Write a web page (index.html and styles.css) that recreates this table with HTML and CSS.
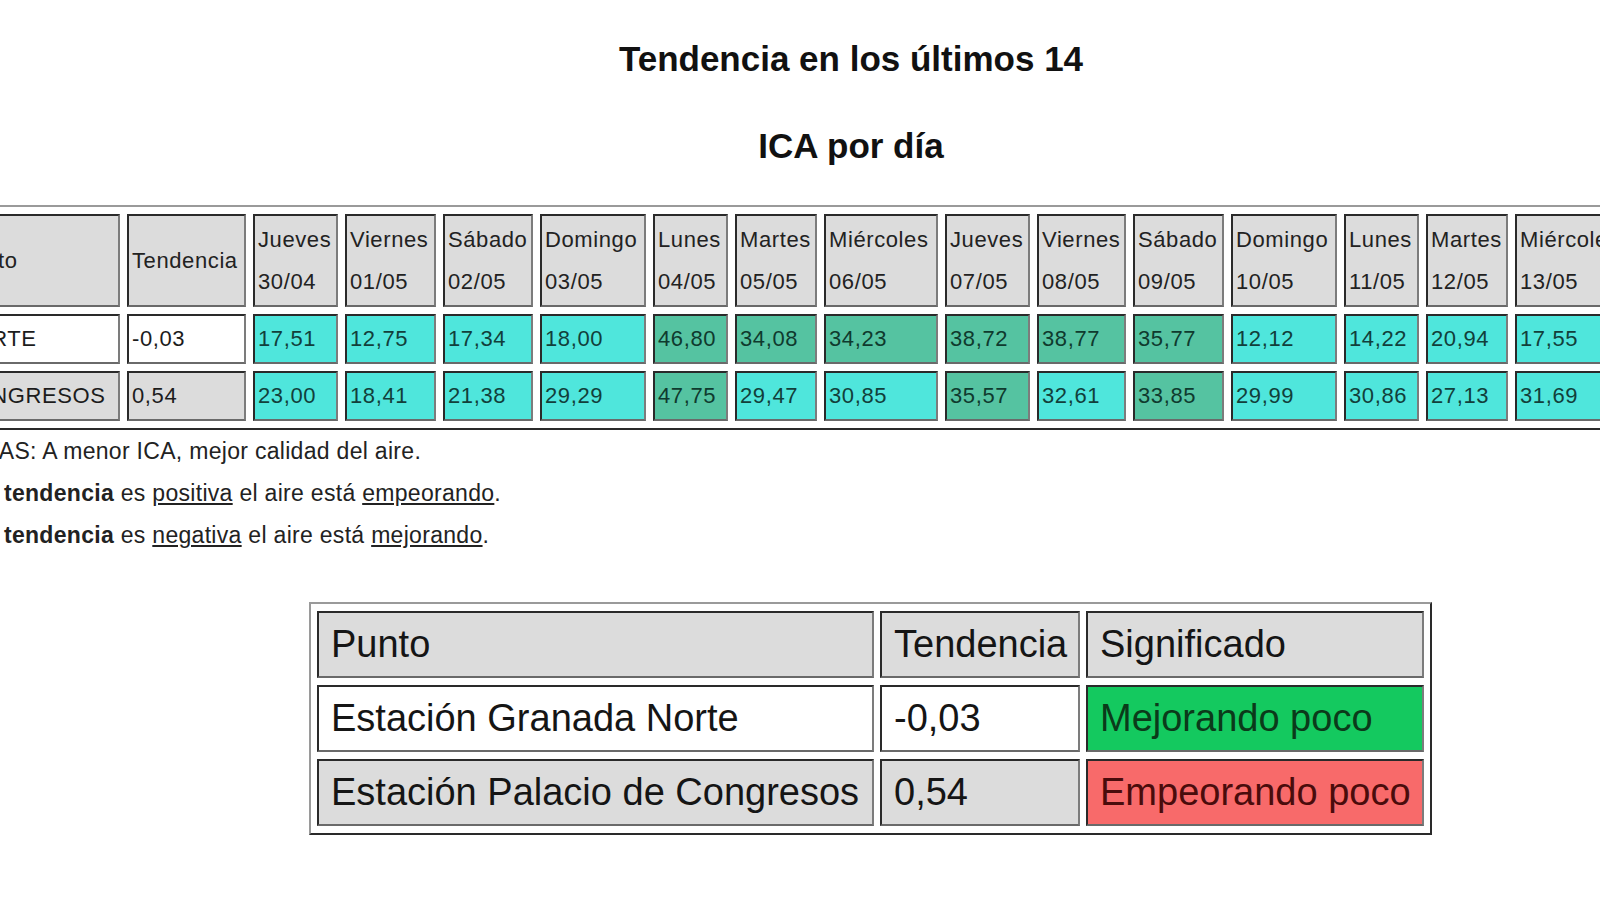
FILE: index.html
```html
<!DOCTYPE html>
<html lang="es">
<head>
<meta charset="utf-8">
<title>Tendencia ICA</title>
<link rel="stylesheet" href="styles.css">
</head>
<body>
<div class="page">
  <h1 class="heading heading-first">Tendencia en los últimos 14</h1>
  <h1 class="heading heading-second">ICA por día</h1>

  <table class="ica">
    <tr>
      <th class="c-punto">Punto</th>
      <th class="c-tend">Tendencia</th>
      <th class="c-jue"><span class="ln">Jueves</span><span class="ln">30/04</span></th>
      <th class="c-vie"><span class="ln">Viernes</span><span class="ln">01/05</span></th>
      <th class="c-sab"><span class="ln">Sábado</span><span class="ln">02/05</span></th>
      <th class="c-dom"><span class="ln">Domingo</span><span class="ln">03/05</span></th>
      <th class="c-lun"><span class="ln">Lunes</span><span class="ln">04/05</span></th>
      <th class="c-mar"><span class="ln">Martes</span><span class="ln">05/05</span></th>
      <th class="c-mie"><span class="ln">Miércoles</span><span class="ln">06/05</span></th>
      <th class="c-jue"><span class="ln">Jueves</span><span class="ln">07/05</span></th>
      <th class="c-vie2"><span class="ln">Viernes</span><span class="ln">08/05</span></th>
      <th class="c-sab2"><span class="ln">Sábado</span><span class="ln">09/05</span></th>
      <th class="c-dom"><span class="ln">Domingo</span><span class="ln">10/05</span></th>
      <th class="c-lun"><span class="ln">Lunes</span><span class="ln">11/05</span></th>
      <th class="c-mar"><span class="ln">Martes</span><span class="ln">12/05</span></th>
      <th class="c-mie"><span class="ln">Miércoles</span><span class="ln">13/05</span></th>
    </tr>
    <tr class="row">
      <td class="white">NORTE</td>
      <td class="white">-0,03</td>
      <td class="low">17,51</td>
      <td class="low">12,75</td>
      <td class="low">17,34</td>
      <td class="low">18,00</td>
      <td class="mid">46,80</td>
      <td class="mid">34,08</td>
      <td class="mid">34,23</td>
      <td class="mid">38,72</td>
      <td class="mid">38,77</td>
      <td class="mid">35,77</td>
      <td class="low">12,12</td>
      <td class="low">14,22</td>
      <td class="low">20,94</td>
      <td class="low">17,55</td>
    </tr>
    <tr class="row">
      <td class="grey">CONGRESOS</td>
      <td class="grey">0,54</td>
      <td class="low">23,00</td>
      <td class="low">18,41</td>
      <td class="low">21,38</td>
      <td class="low">29,29</td>
      <td class="mid">47,75</td>
      <td class="low">29,47</td>
      <td class="low">30,85</td>
      <td class="mid">35,57</td>
      <td class="low">32,61</td>
      <td class="mid">33,85</td>
      <td class="low">29,99</td>
      <td class="low">30,86</td>
      <td class="low">27,13</td>
      <td class="low">31,69</td>
    </tr>
  </table>

  <div class="notes">
    <p class="note">NOTAS: A menor ICA, mejor calidad del aire.</p>
    <p class="note">Si la <b>tendencia</b> es <u>positiva</u> el aire está <u>empeorando</u>.</p>
    <p class="note">Si la <b>tendencia</b> es <u>negativa</u> el aire está <u>mejorando</u>.</p>
  </div>

  <table class="summary">
    <tr>
      <th class="s-punto">Punto</th>
      <th class="s-tend">Tendencia</th>
      <th class="s-sig">Significado</th>
    </tr>
    <tr>
      <td class="white">Estación Granada Norte</td>
      <td class="white">-0,03</td>
      <td class="good">Mejorando poco</td>
    </tr>
    <tr>
      <td class="grey">Estación Palacio de Congresos</td>
      <td class="grey">0,54</td>
      <td class="bad">Empeorando poco</td>
    </tr>
  </table>
</div>
</body>
</html>
```

FILE: styles.css
```css
html, body {
  margin: 0;
  padding: 0;
  background: #ffffff;
  overflow: hidden;
}

body {
  font-family: "Liberation Sans", Arial, sans-serif;
  color: #1c1c1c;
  width: 1600px;
  height: 900px;
}

.page {
  margin-left: -57px;
  width: 1816px;
}

.heading {
  margin: 0;
  font-size: 35px;
  line-height: 40px;
  font-weight: bold;
  text-align: center;
  color: #111111;
}

.heading-first {
  padding-top: 39px;
}

.heading-second {
  margin-top: 47px;
}

/* ---------- daily ICA table ---------- */
.ica {
  margin-top: 39px;
  border-collapse: separate;
  border-spacing: 7px;
  border-style: solid;
  border-width: 2px;
  border-color: #9a9a9a #2a2a2a #2a2a2a #9a9a9a;
  font-size: 22px;
  letter-spacing: 0.6px;
}

.ica th,
.ica td {
  box-sizing: content-box;
  padding: 0 2px 0 3px;
  border-style: solid;
  border-width: 2px;
  border-color: #2a2a2a #7c7c7c #6a6a6a #2a2a2a;
  text-align: left;
  vertical-align: middle;
  font-weight: normal;
  white-space: nowrap;
  overflow: hidden;
}

.ica th {
  height: 89px;
  background: #dcdcdc;
  color: #222222;
}

.ica td {
  height: 46px;
}

.ica .ln {
  display: block;
  line-height: 42px;
}

.c-punto { width: 159px; }
.c-tend { width: 110px; }
.c-jue { width: 76px; }
.c-vie { width: 82px; }
.c-vie2 { width: 80px; }
.c-sab { width: 81px; }
.c-sab2 { width: 82px; }
.c-dom { width: 97px; }
.c-lun { width: 66px; }
.c-mar { width: 73px; }
.c-mie { width: 105px; }

.white {
  background: #ffffff;
  color: #1c1c1c;
}

.grey {
  background: #dcdcdc;
  color: #1c1c1c;
}

.low {
  background: #4fe6dc;
  color: #123f3b;
}

.mid {
  background: #55c3a1;
  color: #0f3a2e;
}

/* ---------- notes ---------- */
.notes {
  display: flex;
  flex-direction: column;
  gap: 17px;
  margin-top: 9px;
  padding-left: 8px;
  font-size: 23px;
  letter-spacing: 0.3px;
  color: #222222;
}

.note {
  margin: 0;
  line-height: 25px;
}

.note u {
  text-underline-offset: 2px;
}

/* ---------- summary table ---------- */
.summary {
  margin-top: 54px;
  margin-left: 366px;
  border-collapse: separate;
  border-spacing: 6px 7px;
  border-style: solid;
  border-width: 2px;
  border-color: #9a9a9a #2a2a2a #2a2a2a #9a9a9a;
  font-size: 38px;
}

.summary th,
.summary td {
  box-sizing: content-box;
  height: 63px;
  padding: 0 10px 0 12px;
  border-style: solid;
  border-width: 2px;
  border-color: #2a2a2a #7c7c7c #6a6a6a #2a2a2a;
  text-align: left;
  vertical-align: middle;
  font-weight: normal;
  white-space: nowrap;
  color: #151515;
}

.summary th {
  background: #dcdcdc;
}

.s-punto { width: 531px; }
.summary .s-tend { width: 178px; padding-right: 6px; }
.s-sig { width: 312px; }

.summary .good {
  background: #14c95f;
  color: #0b3a1a;
}

.summary .bad {
  background: #f86a6a;
  color: #4a0c0c;
}
```
